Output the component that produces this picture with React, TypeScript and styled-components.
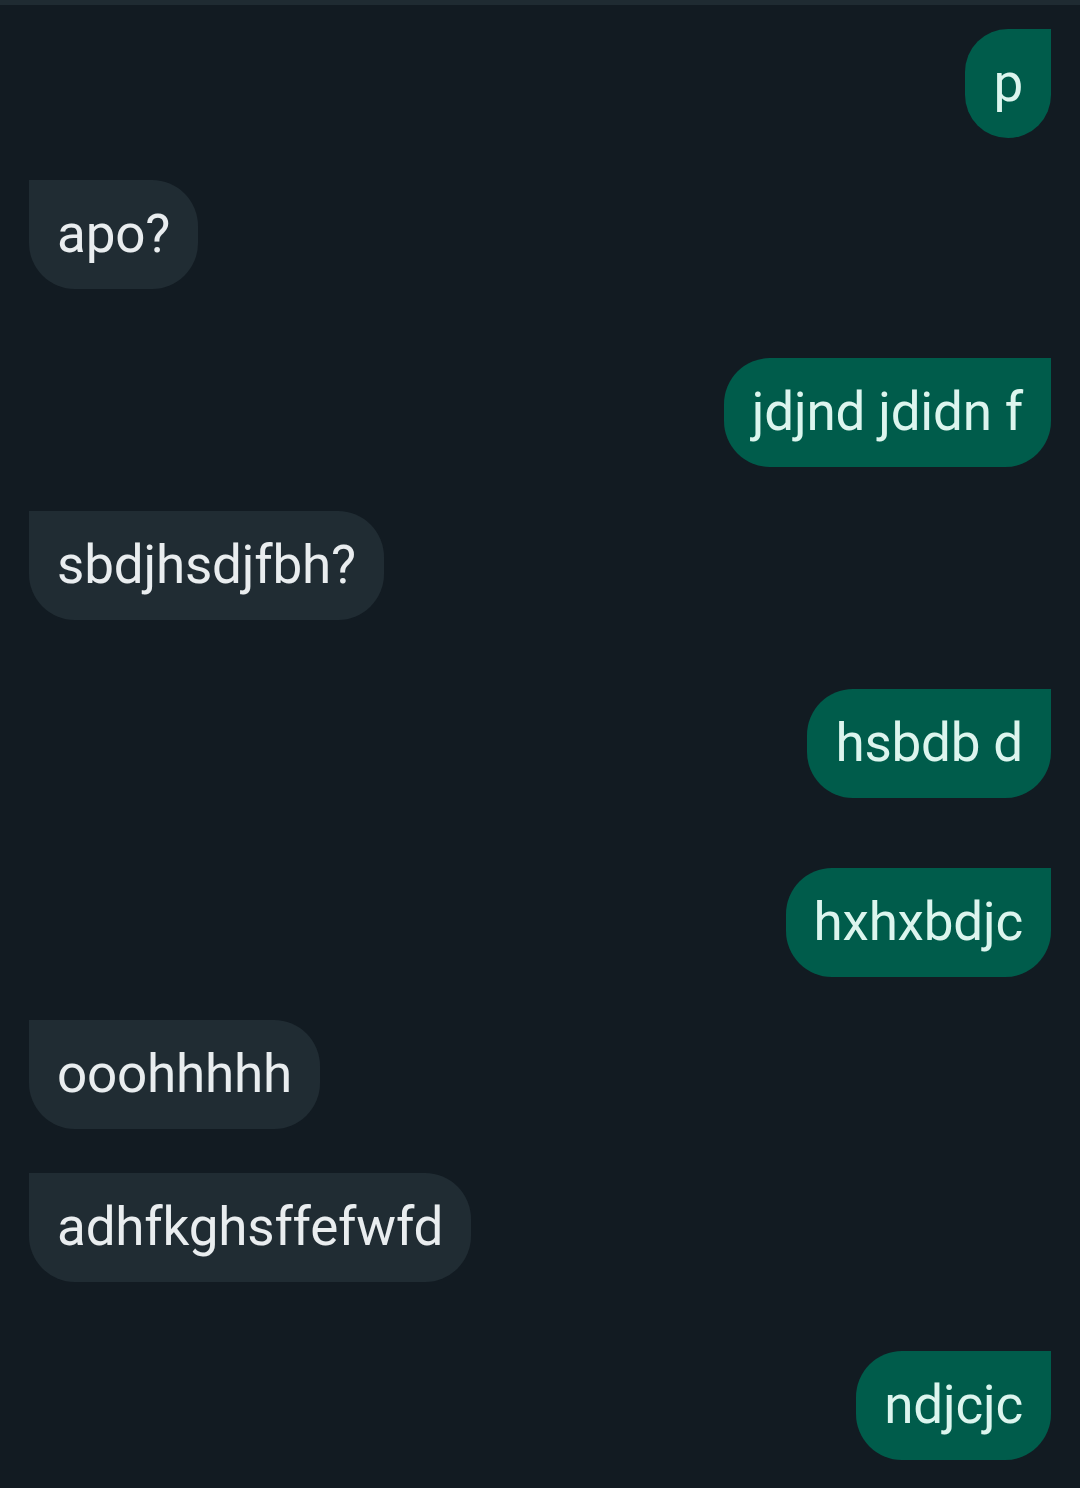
import React from "react";
import styled, { createGlobalStyle } from "styled-components";

const Global = createGlobalStyle`
  html, body {
    margin: 0;
    padding: 0;
    background: #121b22;
  }
  #root {
    min-height: 1488px;
  }
`;

const Screen = styled.div`
  width: 1080px;
  min-height: 1488px;
  background: #121b22;
  display: flex;
  flex-direction: column;
  font-family: Roboto, "Noto Sans", sans-serif;
`;

const TopStripe = styled.div`
  height: 5px;
  background: #1f2b32;
  flex-shrink: 0;
`;

const List = styled.div`
  display: flex;
  flex-direction: column;
  padding: 0 29px;
`;

const Row = styled.div<{ $out: boolean; $gap: number }>`
  display: flex;
  justify-content: ${(p) => (p.$out ? "flex-end" : "flex-start")};
  margin-top: ${(p) => p.$gap}px;
`;

const Bubble = styled.div<{ $out: boolean }>`
  box-sizing: border-box;
  height: 109px;
  padding: 23px 28px;
  font-size: 53px;
  letter-spacing: -0.2px;
  line-height: 63px;
  white-space: nowrap;
  background: ${(p) => (p.$out ? "#005c4b" : "#202c33")};
  color: ${(p) => (p.$out ? "#dcf5ee" : "#e9edef")};
  border-radius: ${(p) => (p.$out ? "46px 0 46px 46px" : "0 46px 46px 46px")};
`;

type Msg = { text: string; out: boolean; gap: number };

const messages: Msg[] = [
  { text: "p", out: true, gap: 24 },
  { text: "apo?", out: false, gap: 42 },
  { text: "jdjnd jdidn f", out: true, gap: 69 },
  { text: "sbdjhsdjfbh?", out: false, gap: 44 },
  { text: "hsbdb d", out: true, gap: 69 },
  { text: "hxhxbdjc", out: true, gap: 70 },
  { text: "ooohhhhh", out: false, gap: 43 },
  { text: "adhfkghsffefwfd", out: false, gap: 44 },
  { text: "ndjcjc", out: true, gap: 69 },
];

export default function App() {
  return (
    <>
      <Global />
      <Screen>
        <TopStripe />
        <List>
          {messages.map((m, i) => (
            <Row key={i} $out={m.out} $gap={m.gap}>
              <Bubble $out={m.out}>{m.text}</Bubble>
            </Row>
          ))}
        </List>
      </Screen>
    </>
  );
}
